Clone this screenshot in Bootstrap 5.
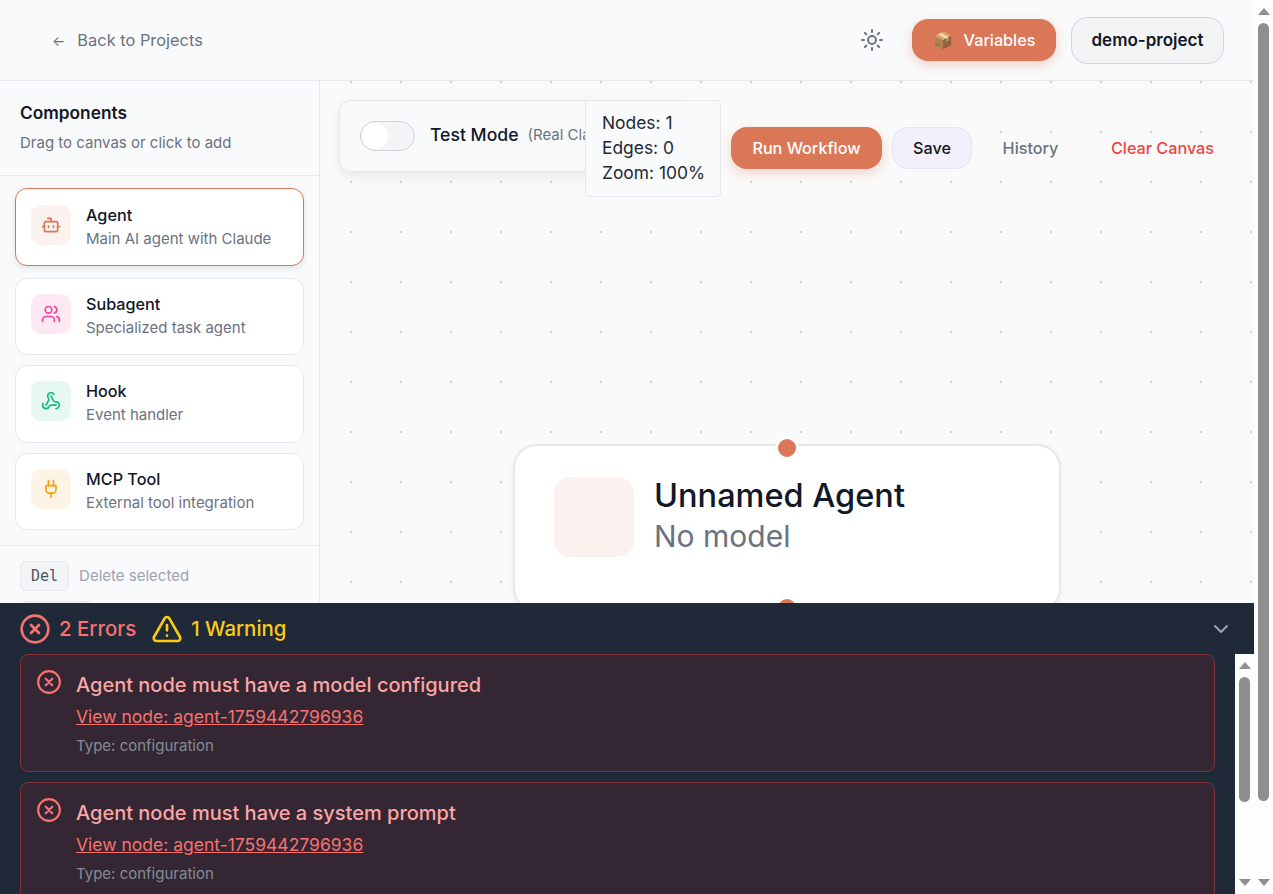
<!DOCTYPE html>
<html lang="en">
<head>
<meta charset="utf-8">
<title>Workflow editor</title>
<link href="https://cdn.jsdelivr.net/npm/bootstrap@5.3.0/dist/css/bootstrap.min.css" rel="stylesheet">
<style>
html,body{height:100%;overflow:hidden;}
body{font-family:Inter,"Noto Sans",sans-serif;color:#111827;background:#fff;font-size:16px;}
svg.ico{fill:none;stroke:currentColor;stroke-width:2;stroke-linecap:round;stroke-linejoin:round;flex:none;display:block;}
.app-root{width:1273px;height:894px;}
.app-main{width:1254px;position:relative;overflow:hidden;}
.page-rail{width:19px;flex:none;background:#fdfdfd;}
.app-top{height:81px;flex:none;background:#f9fafb;border-bottom:1px solid #e5e7eb;padding:0 30px 0 52px;}
.back-link{color:#6b7280;text-decoration:none;font-weight:400;font-size:16.4px;}
.back-link span{margin-right:12px;font-size:14px;}
.theme-btn{color:#6b7280;margin-right:28px;}
.pill{height:42px;border-radius:16px;border:1px solid transparent;padding:0 20px;font-weight:500;font-size:16.2px;display:inline-flex;align-items:center;white-space:nowrap;justify-content:center;}
.pill-accent{background:#d97757;color:#fff;box-shadow:0 4px 12px rgba(217,119,87,.3);}
.pill-run{width:151px;}
.pill-var{width:144px;gap:11px;}
.pill-project{height:47px;margin-left:15px;background:#f3f4f6;border-color:#d1d5db;color:#111827;font-weight:600;font-size:17px;width:153px;padding-top:2px;}
.work-area{flex:1;min-height:0;}
.side-panel{width:320px;flex:none;background:#f9fafb;border-right:1px solid #e5e7eb;}
.side-head{height:95px;padding:21px 20px 0;border-bottom:1px solid #e5e7eb;}
.side-title{font-size:17.3px;font-weight:600;line-height:22px;margin-bottom:8px;}
.side-sub{font-size:15px;line-height:21px;color:#6b7280;}
.side-list{padding:14px 15px 15px;display:flex;flex-direction:column;gap:10px;border-bottom:1px solid #e5e7eb;}
.comp-card{display:flex;align-items:flex-start;gap:15px;padding:15px;background:#fff;border:1px solid #e5e7eb;border-radius:12px;height:77.5px;}
.comp-active{border-color:#d97757;transform:translateY(-2px);box-shadow:0 2px 6px rgba(0,0,0,.1);padding-top:16px;}
.comp-ico{width:40px;height:40px;border-radius:10px;display:flex;align-items:center;justify-content:center;flex:none;}
.ci-agent{background:#fbf1ee;color:#d97757;}
.ci-sub{background:#fde8f3;color:#ec4899;}
.ci-hook{background:#e7f8f1;color:#10b981;}
.ci-mcp{background:#fef4e6;color:#f59e0b;}
.comp-name{font-weight:500;font-size:16.2px;line-height:24px;margin-top:-2px;}
.comp-desc{font-size:15px;line-height:21px;color:#6b7280;margin-top:1px;}
.keys-box{padding:15px 20px;}
.key-row{display:flex;align-items:center;gap:10px;margin-bottom:10px;font-size:15px;color:#9ca3af;}
kbd.keycap{font-family:"DejaVu Sans Mono","Liberation Mono",monospace;font-size:15px;background:#f3f4f6;border:1px solid #e5e7eb;border-radius:6px;color:#4b5563;padding:0 10px;height:30px;display:inline-flex;align-items:center;box-shadow:none;}
.keycap-blank{width:73px;}
.canvas-area{flex:1;position:relative;overflow:hidden;background-color:#fafafa;background-image:radial-gradient(circle at center,#cfd1d6 1px,transparent 1.2px);background-size:50px 50px;background-position:6px -24px;padding:19px 20px 0 19px;}
.tool-row{display:flex;justify-content:space-between;align-items:flex-start;}
.test-box{width:350px;height:72px;background:#f9fafb;border:1px solid #e5e7eb;border-radius:12px;box-shadow:0 4px 12px rgba(0,0,0,.08);padding:0 20px 2px;display:flex;align-items:center;white-space:nowrap;overflow:hidden;}
.tgl{width:55px;height:30px;border-radius:15px;background:#f3f4f6;border:1px solid #d1d5db;position:relative;margin:2px 15px 0 0;flex:none;}
.tgl::after{content:"";position:absolute;left:1px;top:1px;width:26px;height:26px;border-radius:50%;background:#fff;}
.test-name{font-weight:500;font-size:17.6px;margin-right:9px;}
.test-note{font-size:15px;color:#6b7280;display:inline-block;width:57px;overflow:hidden;}
.tool-btns{display:flex;gap:10px;margin-top:27px;}
.pill-save{background:#f3f0fb;border-color:#e6e1f6;color:#111827;width:80px;}
.pill-plain{background:transparent;color:#6b7280;width:95px;margin-left:1px;}
.pill-danger{background:transparent;color:#ef4444;width:143px;margin-left:3px;}
.stat-box{position:absolute;left:265px;top:19px;width:136px;height:97px;background:#f9fafb;border:1px solid #e5e7eb;border-radius:4px;padding:9px 16px;font-size:17.4px;line-height:25px;color:#1f2937;white-space:nowrap;}
.flow-node{position:absolute;left:193px;top:363px;width:548px;height:168px;background:#fff;border:2px solid #e5e7eb;border-radius:24px;padding:31px 39px;display:flex;gap:20px;box-shadow:0 2px 6px rgba(0,0,0,.05);}
.node-ico{width:80px;height:80px;border-radius:16px;background:#fbf1ee;flex:none;}
.node-title{font-size:32.5px;font-weight:500;line-height:38px;}
.node-sub{font-size:30px;line-height:38px;color:#6b7280;margin-top:2px;}
.port{position:absolute;width:24px;height:24px;border-radius:50%;background:#d97757;border:3px solid #fff;left:260px;}
.port-top{top:-10px;}
.port-bot{bottom:-10px;}
.issues{position:absolute;left:0;right:0;top:603px;height:291px;background:#1f2937;z-index:5;}
.issues-head{height:51px;padding:0 20px;}
.iss-err{color:#f87171;font-size:20.4px;font-weight:500;}
.iss-warn{color:#facc15;font-size:20.4px;font-weight:500;}
.txt-drop{padding-top:2px;}
.issues-body{flex:1;min-height:0;}
.issues-list{flex:1;padding:0 20px;overflow:hidden;}
.issue-card{background:#342632;border:1px solid #84323a;border-radius:8px;padding:14px 15px;height:118px;margin-bottom:10px;display:flex;gap:14px;}
.issue-ico{color:#f87171;}
.issue-msg{color:#fca5a5;font-size:20px;font-weight:500;line-height:30px;margin-top:1px;}
.issue-link{color:#f87171;font-size:17.5px;line-height:27px;text-decoration:underline;display:block;margin-top:3px;}
.issue-type{color:#858c98;font-size:15px;line-height:21px;margin-top:5px;}
.inner-rail{width:19px;flex:none;background:#fdfdfd;}
.rail-stack{display:flex;flex-direction:column;align-items:center;height:100%;}
.arrow-up,.arrow-dn{width:0;height:0;border-left:6.5px solid transparent;border-right:6.5px solid transparent;flex:none;}
.arrow-up{border-bottom:7px solid #8f8f8f;}
.arrow-dn{border-top:7px solid #8f8f8f;}
.thumb{width:11px;background:#8f8f8f;border-radius:6px;flex:none;}
.thumb-page{height:778px;margin-top:8px;}
.thumb-inner{height:125px;margin-top:8px;}
.rail-fill{flex:1;}
.warn-mark{margin-left:15px;}
.err-mark{margin-left:-1px;}
.chev{color:#9ca3af;margin-right:1px;}
</style>
</head>
<body>
<div class="app-root d-flex">
  <div class="app-main d-flex flex-column">
    <header class="app-top d-flex align-items-center">
      <a class="back-link" href="#"><span>←</span>Back to Projects</a>
      <div class="ms-auto d-flex align-items-center">
        <div class="theme-btn">
          <svg class="ico" width="24" height="24" viewBox="0 0 24 24"><circle cx="12" cy="12" r="4"/><path d="M12 2v2M12 20v2M4.93 4.93l1.41 1.41M17.66 17.66l1.41 1.41M2 12h2M20 12h2M6.34 17.66l-1.41 1.41M19.07 4.93l-1.41 1.41"/></svg>
        </div>
        <button class="pill pill-accent pill-var" type="button"><span>📦</span><span>Variables</span></button>
        <button class="pill pill-project" type="button">demo-project</button>
      </div>
    </header>
    <div class="work-area d-flex">
      <aside class="side-panel">
        <div class="side-head">
          <div class="side-title">Components</div>
          <div class="side-sub">Drag to canvas or click to add</div>
        </div>
        <div class="side-list">
          <div class="comp-card comp-active">
            <div class="comp-ico ci-agent"><svg class="ico" width="20" height="20" viewBox="0 0 24 24"><path d="M12 8V4H8"/><rect x="4" y="8" width="16" height="12" rx="2"/><path d="M2 14h2M20 14h2M15 13v2M9 13v2"/></svg></div>
            <div><div class="comp-name">Agent</div><div class="comp-desc">Main AI agent with Claude</div></div>
          </div>
          <div class="comp-card">
            <div class="comp-ico ci-sub"><svg class="ico" width="20" height="20" viewBox="0 0 24 24"><path d="M16 21v-2a4 4 0 0 0-4-4H6a4 4 0 0 0-4 4v2"/><circle cx="9" cy="7" r="4"/><path d="M22 21v-2a4 4 0 0 0-3-3.87"/><path d="M16 3.13a4 4 0 0 1 0 7.75"/></svg></div>
            <div><div class="comp-name">Subagent</div><div class="comp-desc">Specialized task agent</div></div>
          </div>
          <div class="comp-card">
            <div class="comp-ico ci-hook"><svg class="ico" width="20" height="20" viewBox="0 0 24 24"><path d="M18 16.98h-5.99c-1.1 0-1.95.94-2.48 1.9A4 4 0 0 1 2 17c.01-.7.2-1.4.57-2"/><path d="m6 17 3.13-5.78c.53-.97.1-2.18-.5-3.1a4 4 0 1 1 6.89-4.06"/><path d="m12 6 3.13 5.73C15.66 12.7 16.9 13 18 13a4 4 0 0 1 0 8"/></svg></div>
            <div><div class="comp-name">Hook</div><div class="comp-desc">Event handler</div></div>
          </div>
          <div class="comp-card">
            <div class="comp-ico ci-mcp"><svg class="ico" width="20" height="20" viewBox="0 0 24 24"><path d="M12 22v-5"/><path d="M9 8V2"/><path d="M15 8V2"/><path d="M18 8v5a4 4 0 0 1-4 4h-4a4 4 0 0 1-4-4V8Z"/></svg></div>
            <div><div class="comp-name">MCP Tool</div><div class="comp-desc">External tool integration</div></div>
          </div>
        </div>
        <div class="keys-box">
          <div class="key-row"><kbd class="keycap">Del</kbd><span>Delete selected</span></div>
          <div class="key-row"><kbd class="keycap keycap-blank"></kbd></div>
        </div>
      </aside>
      <main class="canvas-area">
        <div class="tool-row">
          <div class="test-box">
            <div class="tgl"></div>
            <span class="test-name">Test Mode</span>
            <span class="test-note">(Real Claude)</span>
          </div>
          <div class="tool-btns">
            <button class="pill pill-accent pill-run" type="button">Run Workflow</button>
            <button class="pill pill-save" type="button">Save</button>
            <button class="pill pill-plain" type="button">History</button>
            <button class="pill pill-danger" type="button">Clear Canvas</button>
          </div>
        </div>
        <div class="stat-box"><div>Nodes: 1</div><div>Edges: 0</div><div>Zoom: 100%</div></div>
        <div class="flow-node">
          <span class="port port-top"></span>
          <div class="node-ico"></div>
          <div><div class="node-title">Unnamed Agent</div><div class="node-sub">No model</div></div>
          <span class="port port-bot"></span>
        </div>
      </main>
    </div>
    <section class="issues d-flex flex-column">
      <div class="issues-head d-flex align-items-center">
        <svg class="ico iss-err err-mark" width="32" height="32" viewBox="0 0 24 24"><circle cx="12" cy="12" r="10"/><path d="m15 9-6 6M9 9l6 6"/></svg>
        <span class="iss-err txt-drop ms-2">2 Errors</span>
        <svg class="ico iss-warn warn-mark" width="32" height="32" viewBox="0 0 24 24"><path d="m21.73 18-8-14a2 2 0 0 0-3.48 0l-8 14A2 2 0 0 0 4 21h16a2 2 0 0 0 1.73-3"/><path d="M12 9v4M12 17h.01"/></svg>
        <span class="iss-warn txt-drop ms-2">1 Warning</span>
        <svg class="ico ms-auto chev" width="24" height="24" viewBox="0 0 24 24"><path d="m6 9 6 6 6-6"/></svg>
      </div>
      <div class="issues-body d-flex">
        <div class="issues-list">
          <div class="issue-card">
            <svg class="ico issue-ico" width="26" height="26" viewBox="0 0 24 24"><circle cx="12" cy="12" r="10"/><path d="m15 9-6 6M9 9l6 6"/></svg>
            <div><div class="issue-msg">Agent node must have a model configured</div><a class="issue-link" href="#">View node: agent-1759442796936</a><div class="issue-type">Type: configuration</div></div>
          </div>
          <div class="issue-card">
            <svg class="ico issue-ico" width="26" height="26" viewBox="0 0 24 24"><circle cx="12" cy="12" r="10"/><path d="m15 9-6 6M9 9l6 6"/></svg>
            <div><div class="issue-msg">Agent node must have a system prompt</div><a class="issue-link" href="#">View node: agent-1759442796936</a><div class="issue-type">Type: configuration</div></div>
          </div>
        </div>
        <div class="inner-rail"><div class="rail-stack pt-2 pb-2"><span class="arrow-up"></span><span class="thumb thumb-inner"></span><span class="rail-fill"></span><span class="arrow-dn"></span></div></div>
      </div>
    </section>
  </div>
  <div class="page-rail"><div class="rail-stack pt-2 pb-2"><span class="arrow-up"></span><span class="thumb thumb-page"></span><span class="rail-fill"></span><span class="arrow-dn"></span></div></div>
</div>
</body>
</html>
